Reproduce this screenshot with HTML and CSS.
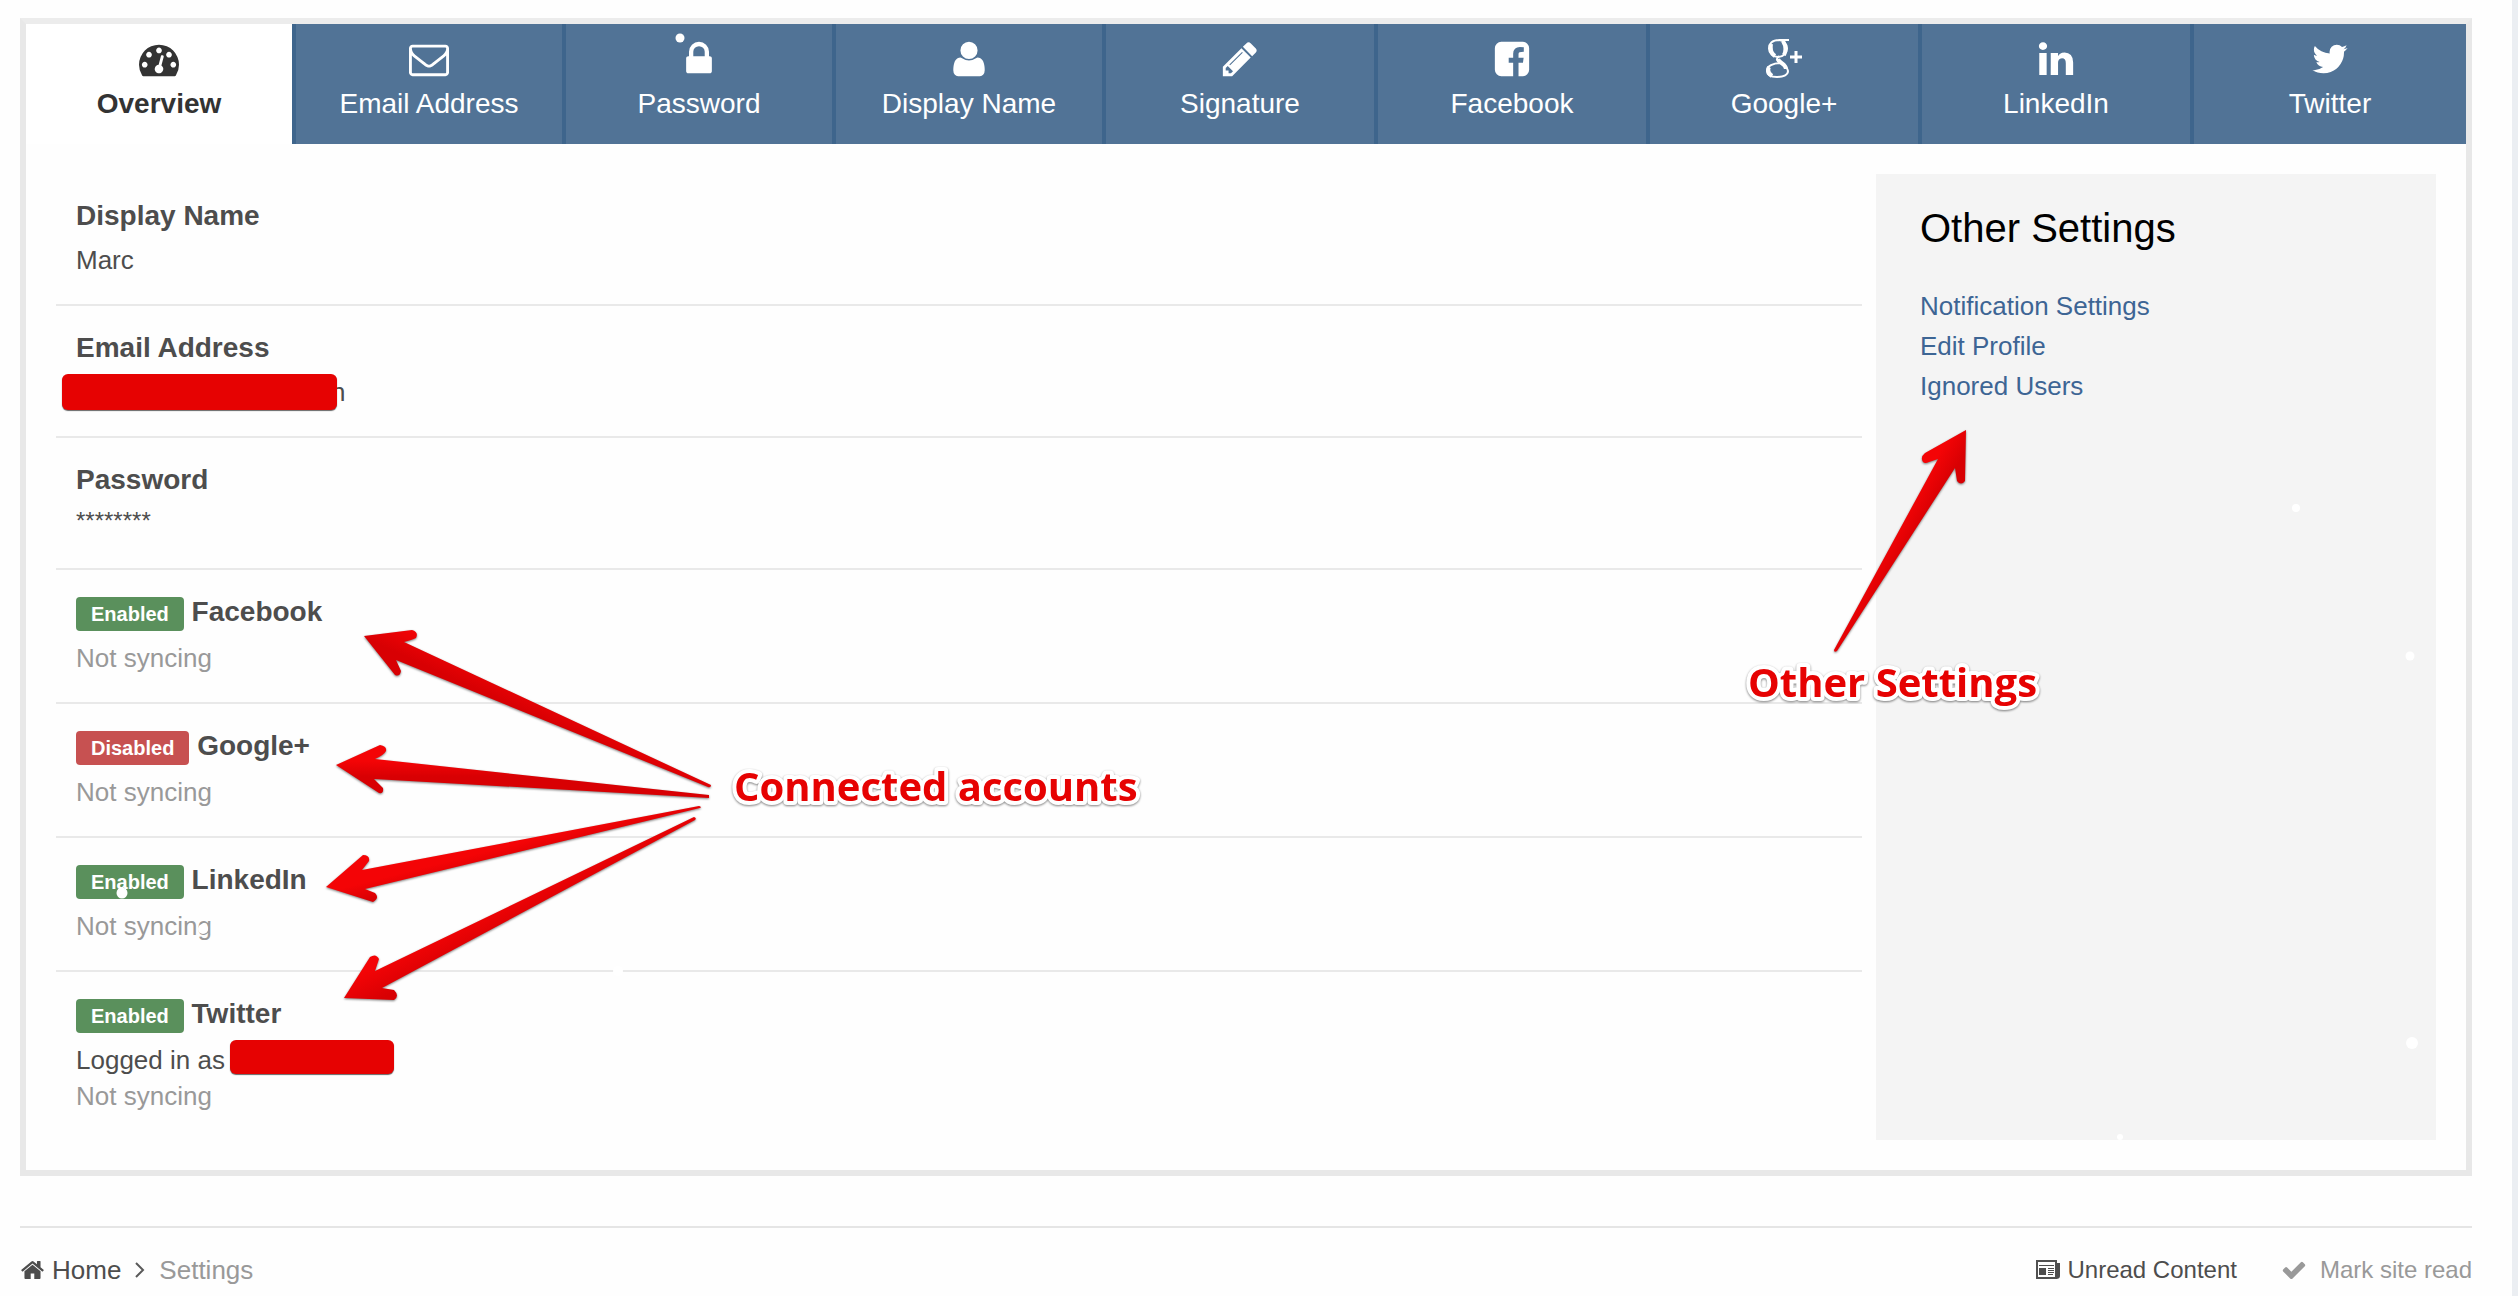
FILE: index.html
```html
<!DOCTYPE html>
<html lang="en">
<head>
    <meta charset="UTF-8">
    <meta name="viewport" content="width=device-width, initial-scale=1.0">
    <title>Settings</title>
    <link rel="stylesheet" href="styles.css">
</head>
<body>
    <!-- Settings panel -->
    <main class="panel">
        <nav class="tabs">
            <a class="tab active" href="#overview">
                <svg class="tab-icon" viewBox="0 0 1792 1792"><path d="M384 1152q0-53-37.5-90.5t-90.5-37.5-90.5 37.5-37.5 90.5 37.5 90.5 90.5 37.5 90.5-37.5 37.5-90.5zm192-448q0-53-37.5-90.5t-90.5-37.5-90.5 37.5-37.5 90.5 37.5 90.5 90.5 37.5 90.5-37.5 37.5-90.5zm428 481l101-382q6-26-7.5-48.5t-38.5-29.5-48 6.5-30 39.5l-101 382q-60 5-107 43.5t-63 98.5q-20 77 20 146t117 89 146-20 89-117q16-60-6-117t-72-91zm660-33q0-53-37.5-90.5t-90.5-37.5-90.5 37.5-37.5 90.5 37.5 90.5 90.5 37.5 90.5-37.5 37.5-90.5zm-640-640q0-53-37.5-90.5t-90.5-37.5-90.5 37.5-37.5 90.5 37.5 90.5 90.5 37.5 90.5-37.5 37.5-90.5zm448 192q0-53-37.5-90.5t-90.5-37.5-90.5 37.5-37.5 90.5 37.5 90.5 90.5 37.5 90.5-37.5 37.5-90.5zm320 448q0 261-141 483-19 29-54 29h-1402q-35 0-54-29-141-221-141-483 0-182 71-348t191-286 286-191 348-71 348 71 286 191 191 286 71 348z"/></svg>
                Overview
            </a>
            <a class="tab" href="#email">
                <svg class="tab-icon" viewBox="0 0 1792 1792"><path d="M1664 1504v-768q-32 36-69 66-268 206-426 338-51 43-83 67t-86.5 48.5-102.5 24.5h-2q-48 0-102.5-24.5t-86.5-48.5-83-67q-158-132-426-338-37-30-69-66v768q0 13 9.5 22.5t22.5 9.5h1472q13 0 22.5-9.5t9.5-22.5zm0-1051v-24.5l-.5-13-3-12.5-5.5-9-9-7.5-14-2.5h-1472q-13 0-22.5 9.5t-9.5 22.5q0 168 147 284 193 152 401 317 6 5 35 29.5t46 37.5 44.5 31.5 50.5 27.5 43 9h2q20 0 43-9t50.5-27.5 44.5-31.5 46-37.5 35-29.5q208-165 401-317 54-43 100.5-115.5t46.5-131.5zm128-37v1088q0 66-47 113t-113 47h-1472q-66 0-113-47t-47-113v-1088q0-66 47-113t113-47h1472q66 0 113 47t47 113z"/></svg>
                Email Address
            </a>
            <a class="tab" href="#password">
                <svg class="tab-icon" viewBox="0 0 1792 1792"><path d="M640 768h512v-192q0-106-75-181t-181-75-181 75-75 181v192zm832 96v576q0 40-28 68t-68 28h-960q-40 0-68-28t-28-68v-576q0-40 28-68t68-28h32v-192q0-184 132-316t316-132 316 132 132 316v192h32q40 0 68 28t28 68z"/></svg>
                Password
            </a>
            <a class="tab" href="#name">
                <svg class="tab-icon" viewBox="0 0 1792 1792"><path d="M1600 1399q0 109-62.5 187t-150.5 78h-982q-88 0-150.5-78t-62.5-187q0-85 8.5-160.5t31.5-152 58.5-131 94-89 134.5-34.5q195 128 377 128t377-128q76 0 134.5 34.5t94 89 58.5 131 31.5 152 8.5 160.5zm-320-887q0 159-112.5 271.5t-271.5 112.5-271.5-112.5-112.5-271.5 112.5-271.5 271.5-112.5 271.5 112.5 112.5 271.5z"/></svg>
                Display Name
            </a>
            <a class="tab" href="#signature">
                <svg class="tab-icon" viewBox="0 0 1792 1792"><path d="M491 1536l91-91-235-235-91 91v107h128v128h107zm523-928q0-22-22-22-10 0-17 7l-542 542q-7 7-7 17 0 22 22 22 10 0 17-7l542-542q7-7 7-17zm-54-192l416 416-832 832h-416v-416zm683 96q0 53-37 90l-166 166-416-416 166-165q36-38 90-38 53 0 91 38l235 234q37 39 37 91z"/></svg>
                Signature
            </a>
            <a class="tab" href="#facebook">
                <svg class="tab-icon" viewBox="0 0 1792 1792"><path d="M1376 128q119 0 203.5 84.5t84.5 203.5v960q0 119-84.5 203.5t-203.5 84.5h-188v-595h199l30-232h-229v-148q0-56 23.5-84t91.5-28l122-1v-207q-63-9-178-9-136 0-217.5 80t-81.5 226v171h-200v232h200v595h-532q-119 0-203.5-84.5t-84.5-203.5v-960q0-119 84.5-203.5t203.5-84.5h960z"/></svg>
                Facebook
            </a>
            <a class="tab" href="#google">
                <svg class="tab-icon" viewBox="0 0 40 40"><g fill="none" stroke="#fff"><path d="M25 1H15C8 1 5 5 5 9.500S9 18 14 18s9-4 9-8.500S19 1 14.500 1" stroke-width="2"/><path d="M7 5c-1 6 1 10 4 12M19 2c3 5 3 10 1 14" stroke-width="4"/><path d="M15 17c-3 3-3 4 1 7 5 3 8 5 8 8 0 4-5 6-11 6-6 0-10-2-10-6 0-5 6-8 14-8" stroke-width="2"/><path d="M14 20c1 4 8 5 8 10M5 28c-2 4 0 7 3 9" stroke-width="4"/><path d="M26 18h12M32 12v12" stroke-width="3"/></g></svg>
                Google+
            </a>
            <a class="tab" href="#linkedin">
                <svg class="tab-icon" viewBox="0 0 1792 1792"><path d="M477 625v991h-330v-991h330zm21-306q1 73-50.5 122t-135.5 49h-2q-82 0-132-49t-50-122q0-74 51.5-122.5t134.5-48.5 133 48.5 51 122.5zm1166 729v568h-329v-530q0-105-40.5-164.5t-126.5-59.5q-63 0-105.5 34.5t-63.5 85.5q-11 30-11 81v553h-329q2-399 2-647t-1-296l-1-48h329v144h-2q20-32 41-56t56.5-52 87-43.5 114.5-15.5q171 0 275 113.5t104 332.5z"/></svg>
                LinkedIn
            </a>
            <a class="tab" href="#twitter">
                <svg class="tab-icon" viewBox="0 0 1792 1792"><path d="M1684 408q-67 98-162 167 1 14 1 42 0 130-38 259.5t-115.5 248.5-184.5 210.5-258 146-323 54.5q-271 0-496-145 35 4 78 4 225 0 401-138-105-2-188-64.5t-114-159.5q33 5 61 5 43 0 85-11-112-23-185.5-111.5t-73.5-205.5v-4q68 38 146 41-66-44-105-115t-39-154q0-88 44-163 121 149 294.5 238.5t371.5 99.5q-8-38-8-74 0-134 94.5-228.5t228.5-94.5q140 0 236 102 109-21 205-78-37 115-142 178 93-10 186-50z"/></svg>
                Twitter
            </a>
        </nav>

        <div class="panel-body">
            <ul class="settings-list">
                <li class="setting">
                    <h3>Display Name</h3>
                    <p>Marc</p>
                </li>
                <li class="setting">
                    <h3>Email Address</h3>
                    <p><span class="redacted redacted-email"></span>n</p>
                </li>
                <li class="setting">
                    <h3>Password</h3>
                    <p class="masked">********</p>
                </li>
                <li class="setting linked">
                    <h3><span class="badge enabled">Enabled</span> Facebook</h3>
                    <p class="muted">Not syncing</p>
                </li>
                <li class="setting linked">
                    <h3><span class="badge disabled">Disabled</span> Google+</h3>
                    <p class="muted">Not syncing</p>
                </li>
                <li class="setting linked">
                    <h3><span class="badge enabled">Enabled</span> LinkedIn</h3>
                    <p class="muted">Not syncing</p>
                </li>
                <li class="setting linked">
                    <h3><span class="badge enabled">Enabled</span> Twitter</h3>
                    <p>Logged in as<span class="redacted redacted-user"></span></p>
                    <p class="muted">Not syncing</p>
                </li>
            </ul>

            <aside class="sidebar">
                <h2>Other Settings</h2>
                <ul>
                    <li><a href="#notifications">Notification Settings</a></li>
                    <li><a href="#profile">Edit Profile</a></li>
                    <li><a href="#ignored">Ignored Users</a></li>
                </ul>
            </aside>
        </div>
    </main>

    <!-- Breadcrumb and site links -->
    <footer class="footer">
        <nav class="breadcrumb">
            <a href="#home">
                <svg class="crumb-icon" viewBox="0 0 1792 1792"><path d="M1472 992v480q0 26-19 45t-45 19h-384v-384h-256v384h-384q-26 0-45-19t-19-45v-480q0-1 .5-3t.5-3l575-474 575 474q1 2 1 6zm223-69l-62 74q-8 9-21 11h-3q-13 0-21-7l-692-577-692 577q-12 8-24 7-13-2-21-11l-62-74q-8-10-7-23.5t11-21.5l719-599q32-26 76-26t76 26l244 204v-195q0-14 9-23t23-9h192q14 0 23 9t9 23v408l219 182q10 8 11 21.5t-7 23.5z"/></svg>
                Home
            </a>
            <svg class="chevron" viewBox="0 0 10 16"><path d="M1 1l7 7-7 7" fill="none" stroke="#5a5a5a" stroke-width="2"/></svg>
            <span class="muted">Settings</span>
        </nav>
        <div class="site-links">
            <a href="#unread">
                <svg class="news-icon" viewBox="0 0 24 20"><path d="M1 1h19v17H1z" fill="none" stroke="#505050" stroke-width="2"/><path d="M20 3h4v13q0 3-4 3zM3 5h15v1H3zM3 8h7v7H3zM12 8h6v1h-6zM12 10h6v1h-6zM12 12h6v1h-6zM12 14h5v1h-5z"/></svg>
                Unread Content
            </a>
            <a class="muted" href="#read">
                <svg class="check-icon" viewBox="0 0 1792 1792"><path d="M1671 566q0 40-28 68l-724 724-136 136q-28 28-68 28t-68-28l-136-136-362-362q-28-28-28-68t28-68l136-136q28-28 68-28t68 28l294 295 656-657q28-28 68-28t68 28l136 136q28 28 28 68z"/></svg>
                Mark site read
            </a>
        </div>
    </footer>

    <!-- Arrows, labels and snow drawn over the page -->
    <svg class="annotations" viewBox="0 0 2518 1296">
        <g fill="#fff">
            <circle cx="680" cy="38" r="4.500"/>
            <circle cx="122" cy="893" r="5.500"/>
            <circle cx="203" cy="929" r="5"/>
            <circle cx="618" cy="971" r="5"/>
            <circle cx="2296" cy="508" r="4"/>
            <circle cx="2410" cy="656" r="4.500"/>
            <circle cx="2412" cy="1043" r="6"/>
            <circle cx="2120" cy="1137" r="3"/>
        </g>
        <defs>
            <linearGradient id="falling" x1=".55" y1=".4" x2=".45" y2=".5">
                <stop offset="0" stop-color="#f40406"/>
                <stop offset="1" stop-color="#d80003"/>
            </linearGradient>
            <linearGradient id="rising" x1=".45" y1=".45" x2=".55" y2=".55">
                <stop offset="0" stop-color="#f40406"/>
                <stop offset="1" stop-color="#d80003"/>
            </linearGradient>
            <linearGradient id="level" x1="0" y1=".3" x2="0" y2=".6">
                <stop offset="0" stop-color="#f40406"/>
                <stop offset="1" stop-color="#d80003"/>
            </linearGradient>
        </defs>
        <g class="arrows">
            <path fill="url(#falling)" d="M364 636L412 630Q419 632 416 638Q412 640 404 642L711 785Q711 788 708 787L396 660L401 671Q400 677 395 675Z"/>
            <path fill="url(#level)" d="M336 765L380 745Q387 746 386 751Q384 755 375 759L709 795V798L374 779L383 788Q384 794 379 793Z"/>
            <path fill="url(#rising)" d="M326 887L363 855Q370 855 369 861L362 870L699 806Q702 807 700 808L365 889L375 893Q380 898 373 902Z"/>
            <path fill="url(#rising)" d="M344 998L370 957Q376 953 379 959L375 971L694 817Q697 818 695 820L382 988L394 990Q400 996 394 1000Z"/>
            <path fill="url(#rising)" d="M1966 430L1925 453Q1920 457 1923 462Q1925 464 1929 462L1938 459L1834 650Q1834 653 1837 651L1955 468L1957 481Q1961 486 1965 481Z"/>
        </g>
        <g class="labels">
            <text x="734" y="801">Connected accounts</text>
            <text x="1748" y="697">Other Settings</text>
        </g>
    </svg>
</body>
</html>
```
FILE: styles.css
```css
* {
    box-sizing: border-box;
}
body {
    position: relative;
    margin: 0;
    padding: 18px 40px 0 20px;
    min-height: 100vh;
    border-right: 6px solid #ebeef2;
    background-color: #fefefe;
    font-family: "Liberation Sans", Arial, sans-serif;
    font-size: 26px;
    line-height: 36px;
    color: #4d4d4d;
}
h2, h3, p, ul {
    margin: 0;
    padding: 0;
    list-style: none;
}
a {
    color: inherit;
    text-decoration: none;
}
svg {
    fill: currentColor;
}
.muted {
    color: #999;
}

/* Panel */
.panel {
    border: 6px solid #e8e8e8;
    border-top-color: #ececec;
}
.tabs {
    display: grid;
    grid-template-columns: repeat(4, 270fr) repeat(5, 272fr);
}
.tab {
    display: flex;
    flex-direction: column;
    align-items: center;
    gap: 5px;
    padding: 15px 0 20px;
    border-right: 4px solid #3e658c;
    background-color: #517396;
    color: #fff;
    font-size: 28px;
    line-height: 40px;
}
.tab:last-child {
    border-right: none;
}
.tab.active {
    background-color: #fff;
    color: #333;
    font-weight: bold;
}
.tab-icon {
    width: 40px;
    height: 40px;
}
.panel-body {
    display: grid;
    grid-template-columns: 1fr 560px;
    gap: 14px;
    padding: 30px;
}

/* Settings list */
.setting {
    padding: 22px 20px 26px;
    border-bottom: 2px solid #e9e9e9;
}
.setting:last-child {
    border-bottom: none;
}
.setting h3 {
    margin-bottom: 6px;
    font-size: 28px;
    line-height: 40px;
}
.setting.linked h3 {
    margin-bottom: 8px;
}
.masked {
    margin-bottom: 6px;
    font-size: 24px;
    line-height: 30px;
}
.badge {
    display: inline-block;
    padding: 0 15px;
    border-radius: 4px;
    color: #fff;
    font-size: 20px;
    line-height: 34px;
}
.enabled {
    background-color: #5a905c;
}
.disabled {
    background-color: #c75151;
}
.redacted {
    display: inline-block;
    position: relative;
    border-radius: 6px;
    background-color: #e60202;
    box-shadow: 0 1px 1px #666;
    vertical-align: top;
}
.redacted-email {
    width: 275px;
    height: 36px;
    margin: 0 -6px 0 -14px;
}
.redacted-user {
    width: 164px;
    height: 34px;
    margin: -2px 0 0 5px;
}

/* Sidebar */
.sidebar {
    padding: 28px 44px;
    background-color: #f4f4f4;
}
.sidebar h2 {
    margin-bottom: 32px;
    color: #000;
    font-size: 40px;
    font-weight: normal;
    line-height: 52px;
}
.sidebar li {
    line-height: 40px;
}
.sidebar a {
    color: #3d6594;
}

/* Footer */
.footer {
    display: flex;
    justify-content: space-between;
    margin-top: 50px;
    padding-top: 24px;
    border-top: 2px solid #e5e5e5;
}
.breadcrumb, .site-links, .footer a {
    display: flex;
    align-items: center;
}
.breadcrumb {
    gap: 14px;
}
.breadcrumb a {
    gap: 7px;
}
.crumb-icon {
    width: 25px;
    height: 26px;
}
.chevron {
    width: 10px;
    height: 16px;
}
.site-links {
    gap: 44px;
    font-size: 24px;
}
.site-links a {
    gap: 7px;
}
.news-icon {
    width: 24px;
    height: 20px;
}
.check-icon {
    width: 26px;
    height: 26px;
    margin-right: 6px;
}

/* Annotations */
.annotations {
    position: absolute;
    top: 0;
    left: 0;
    width: 100vw;
    pointer-events: none;
}
.arrows {
    filter: drop-shadow(0 1px 1px rgba(0, 0, 0, 0.5));
}
.labels {
    fill: #e60202;
    stroke: #fff;
    stroke-width: 8px;
    stroke-linejoin: round;
    paint-order: stroke;
    font-family: "Open Sans", sans-serif;
    font-size: 40px;
    font-weight: bold;
    filter: drop-shadow(0 1px 1px rgba(0, 0, 0, 0.5));
}
```
